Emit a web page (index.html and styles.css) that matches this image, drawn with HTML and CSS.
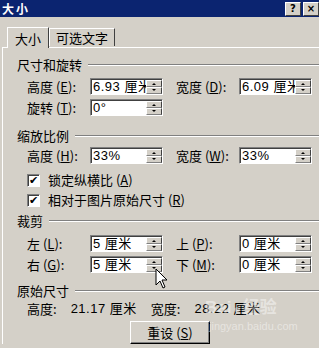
FILE: index.html
```html
<!DOCTYPE html>
<html lang="zh-CN">
<head>
    <meta charset="UTF-8">
    <title>大小</title>
    <link rel="stylesheet" href="styles.css">
</head>
<body>
    <div class="dialog">
        <div class="titlebar">
            <span class="title">大小</span>
            <span class="tb-btn">?</span>
            <span class="tb-btn">×</span>
        </div>

        <div class="tabs">
            <div class="tab active">大小</div>
            <div class="tab">可选文字</div>
        </div>

        <div class="panel">
            <div class="group-head">尺寸和旋转</div>
            <div class="row first">
                <label class="lbl">高度 (<u>E</u>):</label>
                <div class="spin"><span class="val">6.93 厘米</span><span class="arrows"><i></i><i class="dn"></i></span></div>
                <label class="lbl">宽度 (<u>D</u>):</label>
                <div class="spin"><span class="val">6.09 厘米</span><span class="arrows"><i></i><i class="dn"></i></span></div>
            </div>
            <div class="row">
                <label class="lbl">旋转 (<u>T</u>):</label>
                <div class="spin"><span class="val">0°</span><span class="arrows"><i></i><i class="dn"></i></span></div>
            </div>

            <div class="group-head g2">缩放比例</div>
            <div class="row first-s">
                <label class="lbl">高度 (<u>H</u>):</label>
                <div class="spin"><span class="val">33%</span><span class="arrows"><i></i><i class="dn"></i></span></div>
                <label class="lbl">宽度 (<u>W</u>):</label>
                <div class="spin"><span class="val">33%</span><span class="arrows"><i></i><i class="dn"></i></span></div>
            </div>
            <div class="check c1"><span class="box">✔</span>锁定纵横比 (<u>A</u>)</div>
            <div class="check c2"><span class="box">✔</span>相对于图片原始尺寸 (<u>R</u>)</div>

            <div class="group-head g3">裁剪</div>
            <div class="row first-c">
                <label class="lbl">左 (<u>L</u>):</label>
                <div class="spin"><span class="val">5 厘米</span><span class="arrows"><i></i><i class="dn"></i></span></div>
                <label class="lbl">上 (<u>P</u>):</label>
                <div class="spin"><span class="val">0 厘米</span><span class="arrows"><i></i><i class="dn"></i></span></div>
            </div>
            <div class="row">
                <label class="lbl">右 (<u>G</u>):</label>
                <div class="spin"><span class="val">5 厘米</span><span class="arrows"><i></i><i class="dn"></i></span></div>
                <label class="lbl">下 (<u>M</u>):</label>
                <div class="spin"><span class="val">0 厘米</span><span class="arrows"><i></i><i class="dn"></i></span></div>
            </div>

            <div class="group-head g4">原始尺寸</div>
            <div class="orig">
                <span>高度:</span><span class="num">21.17 厘米</span>
                <span class="w">宽度:</span><span class="num">28.22 厘米</span>
            </div>
            <div class="btn-row">
                <button class="btn">重设 (<u>S</u>)</button>
            </div>
        </div>

        <!-- mouse pointer over the spinner -->
        <svg class="cursor" width="14" height="22" viewBox="0 0 14 22">
            <path d="M1 1 L1 17 L5 13 L8 20 L10 19 L7 12 L12 12 Z" fill="#fff" stroke="#000" stroke-width="1"/>
        </svg>

        <div class="watermark">
            <div class="wm-top">Bai<span class="paw">●</span>经验</div>
            <div class="wm-url">jingyan.baidu.com</div>
        </div>
    </div>
</body>
</html>
```

FILE: styles.css
```css
body {
    margin: 0;
    background: #d4d0c8;
    font-family: "Noto Sans CJK SC", "DejaVu Sans", sans-serif;
    font-size: 12px;
    color: #000;
}

.dialog {
    position: relative;
    width: 319px;
    height: 348px;
    overflow: hidden;
    background: #d4d0c8;
}

.titlebar {
    height: 17px;
    background: #0b2470;
    display: flex;
    align-items: center;
    padding-left: 2px;
    gap: 2px;
}

.title {
    flex: 1;
    color: #fff;
    font-weight: bold;
    font-size: 12px;
    line-height: 17px;
    letter-spacing: 2px;
}

.tb-btn {
    width: 16px;
    height: 14px;
    background: #d4d0c8;
    border: 1px solid;
    border-color: #fff #404040 #404040 #fff;
    box-sizing: border-box;
    font-family: "DejaVu Sans", sans-serif;
    font-weight: bold;
    font-size: 10px;
    line-height: 12px;
    text-align: center;
}

.tabs {
    display: flex;
    align-items: flex-end;
    height: 30px;
    padding-left: 7px;
    position: relative;
    z-index: 1;
}

.tab {
    height: 17px;
    padding: 0 6px;
    border: 1px solid;
    border-color: #fff #404040 transparent #fff;
    border-bottom: none;
    line-height: 17px;
    font-size: 13px;
    margin-bottom: 1px;
}

.tab.active {
    height: 20px;
    padding: 0 7px;
    margin-bottom: -1px;
    background: #d4d0c8;
    line-height: 21px;
}

.panel {
    margin-left: 2px;
    border-top: 1px solid #fff;
    border-left: 1px solid #fff;
    padding-left: 14px;
    padding-top: 11px;
}

.group-head {
    display: flex;
    align-items: center;
    gap: 6px;
    height: 12px;
    line-height: 12px;
    font-size: 13px;
}

.group-head::after {
    content: "";
    flex: 1;
    border-top: 1px solid #808080;
    border-bottom: 1px solid #fff;
}

.g2 { margin-top: 14px; }
.g3 { margin-top: 8px; }
.g4 { margin-top: 12px; }

.row {
    display: grid;
    grid-template-columns: 63px 86px 63px 73px;
    margin-top: 4px;
    padding-left: 10px;
    height: 17px;
    align-items: center;
}

.row.first { margin-top: 7px; }
.row.first-s { margin-top: 5px; }
.row.first-c { margin-top: 8px; }

.lbl {
    font-size: 13px;
    line-height: 17px;
    white-space: nowrap;
}

.spin {
    position: relative;
    height: 17px;
    width: 73px;
    box-sizing: border-box;
    background: #fff;
    border: 1px solid;
    border-color: #808080 #fff #fff #808080;
    box-shadow: inset 1px 1px 0 #404040;
    overflow: hidden;
}

.val {
    display: block;
    padding-left: 2px;
    font-family: "Liberation Sans", "Noto Sans CJK SC", sans-serif;
    font-size: 13px;
    line-height: 15px;
    white-space: nowrap;
    letter-spacing: 0.5px;
}

.arrows {
    position: absolute;
    right: 0;
    top: 1px;
    bottom: 0;
    width: 16px;
    display: flex;
    flex-direction: column;
}

.arrows i {
    flex: 1;
    background: #d4d0c8;
    border: 1px solid;
    border-color: #fff #404040 #808080 #fff;
    position: relative;
}

.arrows i::after {
    content: "";
    position: absolute;
    left: 5px;
    top: 2px;
    border-left: 2px solid transparent;
    border-right: 2px solid transparent;
    border-bottom: 2px solid #000;
}

.arrows i.dn::after {
    border-bottom: none;
    border-top: 2px solid #000;
    top: 1px;
}

.check {
    display: flex;
    align-items: center;
    height: 14px;
    padding-left: 10px;
    font-size: 13px;
    line-height: 14px;
}

.c1 { margin-top: 9px; }
.c2 { margin-top: 6px; }

.box {
    width: 13px;
    height: 13px;
    box-sizing: border-box;
    margin-right: 8px;
    background: #fff;
    border: 1px solid;
    border-color: #808080 #fff #fff #808080;
    box-shadow: inset 1px 1px 0 #404040;
    font-size: 11px;
    line-height: 12px;
    text-align: center;
    font-family: "DejaVu Sans", sans-serif;
    font-weight: bold;
}

.orig {
    display: flex;
    margin-top: 6px;
    padding-left: 10px;
    height: 12px;
    font-size: 13px;
    line-height: 12px;
    white-space: nowrap;
}

.orig .num {
    margin-left: 14px;
    font-family: "Liberation Sans", "Noto Sans CJK SC", sans-serif;
    letter-spacing: 0.5px;
}

.orig .w { margin-left: 14px; }

.btn-row {
    margin-top: 6px;
    padding-left: 113px;
}

.btn {
    width: 80px;
    height: 23px;
    background: #d4d0c8;
    border: 1px solid;
    border-color: #fff #000 #000 #fff;
    box-shadow: inset -1px -1px 0 #808080;
    font-family: "Noto Sans CJK SC", sans-serif;
    font-size: 13px;
    line-height: 20px;
    padding: 0;
}

.cursor {
    position: absolute;
    left: 155px;
    top: 268px;
}

.watermark {
    position: absolute;
    left: 205px;
    top: 298px;
    color: rgba(255, 255, 255, 0.45);
    font-family: "Liberation Sans", "Noto Sans CJK SC", sans-serif;
    pointer-events: none;
}

.wm-top {
    font-size: 17px;
    font-weight: bold;
    line-height: 20px;
}

.paw { font-size: 12px; margin: 0 2px; }

.wm-url {
    font-size: 11px;
    line-height: 14px;
    margin-left: 4px;
}
```
